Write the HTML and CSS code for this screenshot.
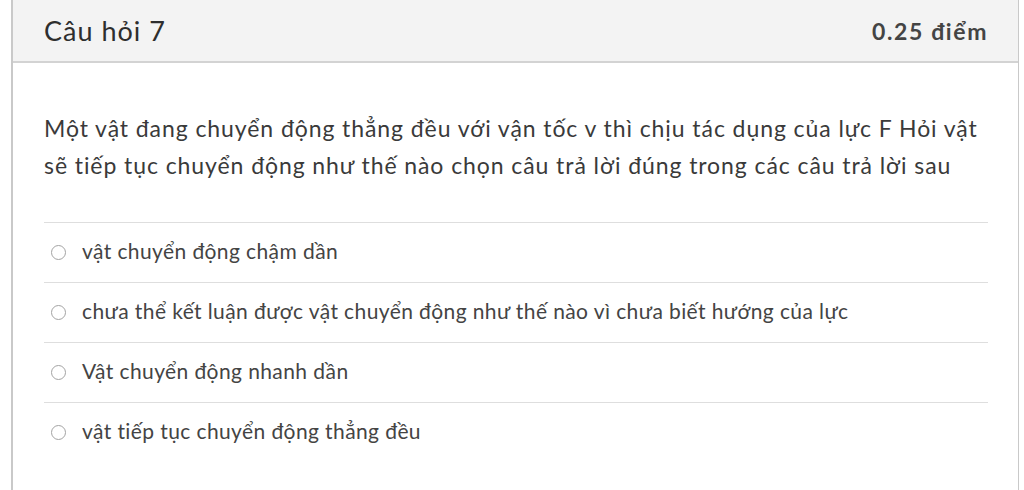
FILE: index.html
```html
<!DOCTYPE html>
<html lang="vi">
<head>
    <meta charset="UTF-8">
    <meta name="viewport" content="width=device-width, initial-scale=1.0">
    <title>Câu hỏi 7</title>
    <link rel="stylesheet" href="styles.css">
</head>
<body>
    <div class="question-card">
        <div class="question-header">
            <h2>Câu hỏi 7</h2>
            <span class="points">0.25 điểm</span>
        </div>
        <div class="question-body">
            <p class="question-text">Một vật đang chuyển động thẳng đều với vận tốc v thì chịu tác dụng của lực F Hỏi vật sẽ tiếp tục chuyển động như thế nào chọn câu trả lời đúng trong các câu trả lời sau</p>
            <div class="answers">
                <label class="answer"><span class="radio"></span>vật chuyển động chậm dần</label>
                <label class="answer"><span class="radio"></span>chưa thể kết luận được vật chuyển động như thế nào vì chưa biết hướng của lực</label>
                <label class="answer"><span class="radio"></span>Vật chuyển động nhanh dần</label>
                <label class="answer"><span class="radio"></span>vật tiếp tục chuyển động thẳng đều</label>
            </div>
        </div>
    </div>
</body>
</html>
```

FILE: styles.css
```css
/* General */
body {
    margin: 0;
    background: #fff;
    font-family: Lato, "Open Sans", sans-serif;
    color: #3b3b3b;
}

.question-card {
    margin-left: 11px;
    width: 1005px;
    border: 1px solid #c9c9c9;
    border-top: none;
    border-left-width: 2px;
    min-height: 520px;
}

.question-header {
    height: 61px;
    display: flex;
    align-items: center;
    justify-content: space-between;
    padding: 0 30px 0 31px;
    background: #f3f3f3;
    border-bottom: 2px solid #d3d3d3;
}

.question-header h2 {
    margin: 0;
    font-size: 27px;
    font-weight: 400;
    letter-spacing: 1px;
    color: #2e2e2e;
}

.points {
    font-size: 23px;
    font-weight: 700;
    letter-spacing: 1.6px;
    color: #444;
}

.question-body {
    padding: 47px 30px 0 31px;
}

.question-text {
    margin: 0 0 38px;
    font-size: 23px;
    line-height: 37px;
    letter-spacing: 0.92px;
    color: #3a3a3a;
}

.answer {
    display: flex;
    align-items: center;
    height: 60px;
    padding-bottom: 4px;
    box-sizing: border-box;
    border-top: 1px solid #dedede;
    font-size: 21px;
    letter-spacing: 0.4px;
    color: #444;
}

.radio {
    width: 13px;
    height: 13px;
    border: 1.5px solid #a3a3a3;
    border-radius: 50%;
    margin: 4px 16px 0 7px;
    flex-shrink: 0;
}
```
